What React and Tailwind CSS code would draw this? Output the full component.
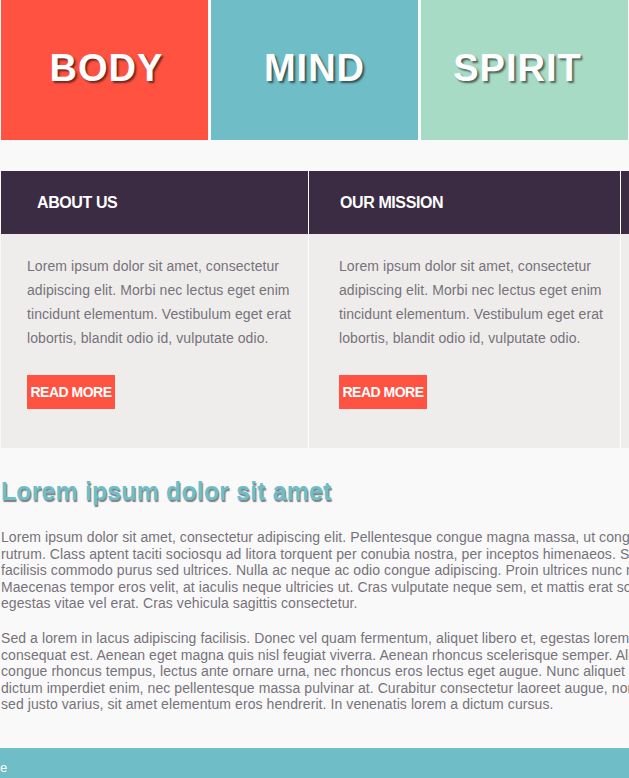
import React from "react";

const para1 = [
  "Lorem ipsum dolor sit amet, consectetur adipiscing elit. Pellentesque congue magna massa, ut congue nibh",
  "rutrum. Class aptent taciti sociosqu ad litora torquent per conubia nostra, per inceptos himenaeos. Sed",
  "facilisis commodo purus sed ultrices. Nulla ac neque ac odio congue adipiscing. Proin ultrices nunc nec",
  "Maecenas tempor eros velit, at iaculis neque ultricies ut. Cras vulputate neque sem, et mattis erat sodales",
  "egestas vitae vel erat. Cras vehicula sagittis consectetur.",
];

const para2 = [
  "Sed a lorem in lacus adipiscing facilisis. Donec vel quam fermentum, aliquet libero et, egestas lorem. Nam",
  "consequat est. Aenean eget magna quis nisl feugiat viverra. Aenean rhoncus scelerisque semper. Aliquam",
  "congue rhoncus tempus, lectus ante ornare urna, nec rhoncus eros lectus eget augue. Nunc aliquet nisi",
  "dictum imperdiet enim, nec pellentesque massa pulvinar at. Curabitur consectetur laoreet augue, non",
  "sed justo varius, sit amet elementum eros hendrerit. In venenatis lorem a dictum cursus.",
];

function Tile({ color, label, extra = "" }) {
  return (
    <div className={`h-[140px] shrink-0 flex items-center justify-center ${color} ${extra}`}>
      <span className="text-white font-bold text-[38px] tracking-[1px] leading-none -mt-[4px] [text-shadow:2px_2px_2px_rgba(0,0,0,0.55)]">
        {label}
      </span>
    </div>
  );
}

function Card({ width, title, headPad, bodyPad }) {
  return (
    <div className={`${width} shrink-0 flex flex-col`}>
      <div className={`h-[63px] bg-[#3b2c43] flex items-center ${headPad}`}>
        <span className="text-white font-bold text-[16px] tracking-[-0.4px]">{title}</span>
      </div>
      <div className={`h-[214px] bg-[#eeedeb] pt-[20px] ${bodyPad}`}>
        <p className="w-[276px] text-[14px] leading-[24px] tracking-[0.08px] text-[#77727b]">
          Lorem ipsum dolor sit amet, consectetur adipiscing elit. Morbi nec lectus eget enim tincidunt elementum. Vestibulum eget erat lobortis, blandit odio id, vulputate odio.
        </p>
        <button className="mt-[25px] h-[34px] w-[88px] bg-[#ff5241] text-white font-bold text-[14px] tracking-[-0.5px] flex items-center justify-center">
          READ MORE
        </button>
      </div>
    </div>
  );
}

export default function App() {
  return (
    <div className="min-h-screen bg-[#f9f9f9] overflow-hidden font-['Liberation_Sans',Arial,sans-serif]">
      <div className="w-[940px] pl-px">
        <div className="flex gap-[3px]">
          <Tile color="bg-[#ff5241]" label="BODY" extra="w-[207px] pl-[4px]" />
          <Tile color="bg-[#6fbdc6]" label="MIND" extra="w-[207px]" />
          <Tile color="bg-[#a8dbc6]" label="SPIRIT" extra="w-[207px] pr-[14px]" />
        </div>

        <div className="mt-[31px] flex gap-px bg-white w-max">
          <Card width="w-[307px]" title="ABOUT US" headPad="pl-[36px]" bodyPad="pl-[26px]" />
          <Card width="w-[311px]" title="OUR MISSION" headPad="pl-[31px]" bodyPad="pl-[30px]" />
          <div className="w-[310px] shrink-0 flex flex-col">
            <div className="h-[63px] bg-[#3b2c43]" />
            <div className="h-[214px] bg-[#eeedeb]" />
          </div>
        </div>

        <h1 className="mt-[28px] text-[25px] leading-[30px] font-bold text-[#6fbdc6] tracking-[0.1px] [text-shadow:1px_2px_1px_rgba(40,50,55,0.6)]">
          Lorem ipsum dolor sit amet
        </h1>

        <p className="mt-[23px] text-[14px] leading-[16.6px] tracking-[0.08px] text-[#77727b]">
          {para1.map((l, i) => (
            <span key={i} className="block whitespace-nowrap">{l}</span>
          ))}
        </p>
        <p className="mt-[18px] text-[14px] leading-[16.6px] tracking-[0.08px] text-[#77727b]">
          {para2.map((l, i) => (
            <span key={i} className="block whitespace-nowrap">{l}</span>
          ))}
        </p>
      </div>

      <footer className="mt-[35px] h-[40px] bg-[#6fbdc6] pt-[12px] text-white text-[13px] leading-[16px]">
        <span>e</span>
      </footer>
    </div>
  );
}
